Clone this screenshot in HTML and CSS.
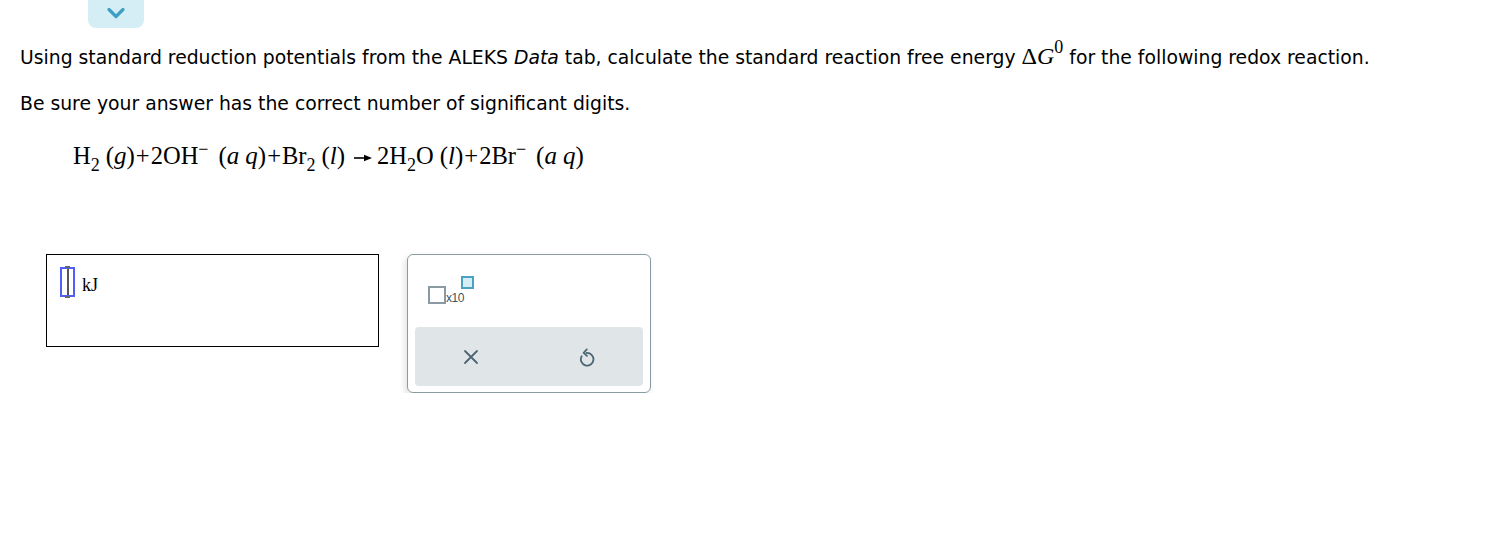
FILE: index.html
```html
<!DOCTYPE html>
<html>
<head>
<meta charset="utf-8">
<link rel="stylesheet" href="styles.css">
</head>
<body>
<div class="page">
  <div class="tab-row">
    <div class="tab">
      <svg width="22" height="14" viewBox="0 0 22 14"><path d="M4 3.5 L11 10.5 L18 3.5" fill="none" stroke="#3d9fc4" stroke-width="3.2" stroke-linecap="round" stroke-linejoin="round"/></svg>
    </div>
  </div>
  <p class="q">Using standard reduction potentials from the ALEKS <i>Data</i> tab, calculate the standard reaction free energy <span class="math">Δ<i>G</i><sup class="zero">0</sup></span> for the following redox reaction.</p>
  <p class="q q2">Be sure your answer has the correct number of significant digits.</p>
  <div class="eq">H<sub>2</sub><span class="par">(<i>g</i>)</span><span class="op">+</span>2OH<sup>−</sup><span class="par sp">(<i>a</i>&thinsp;<i>q</i>)</span><span class="op">+</span>Br<sub>2</sub><span class="par">(<i>l</i>)</span><svg class="arrow" width="18" height="8" viewBox="0 0 18 8"><path d="M0 4 L12 4" stroke="#000" stroke-width="1.6"/><path d="M10 0.8 L18 4 L10 7.2 Z" fill="#000"/></svg>2H<sub>2</sub>O<span class="par">(<i>l</i>)</span><span class="op">+</span>2Br<sup>−</sup><span class="par sp">(<i>a</i>&thinsp;<i>q</i>)</span></div>
  <div class="answer-row">
    <div class="answer">
      <span class="cursor"><span class="beam"></span></span>
      <span class="unit">kJ</span>
    </div>
    <div class="panel">
      <div class="sci">
        <span class="base-box"></span><span class="x10">x10</span><span class="exp-box"></span>
      </div>
      <div class="actions">
        <span class="btn">
          <svg width="18" height="18" viewBox="0 0 18 18"><path d="M3 3 L15 15 M15 3 L3 15" stroke="#4b6672" stroke-width="1.8" stroke-linecap="round"/></svg>
        </span>
        <span class="btn">
          <svg width="18" height="20" viewBox="0 0 18 20"><path d="M3.6 9.3 A6.3 6.3 0 1 0 8.5 6" fill="none" stroke="#4b6672" stroke-width="1.8" stroke-linecap="round"/><path d="M8.8 2.4 L5.6 5.8 L9 8.8" fill="none" stroke="#4b6672" stroke-width="1.8" stroke-linecap="round" stroke-linejoin="round"/></svg>
        </span>
      </div>
    </div>
  </div>
</div>
</body>
</html>
```
FILE: styles.css
```css
html, body { margin: 0; padding: 0; background: #fff; }
.page { padding: 0 0 0 20px; font-family: "DejaVu Sans", Verdana, sans-serif; color: #000; }
.tab-row { height: 28px; padding-left: 68px; }
.tab { width: 56px; height: 28px; background: #d5eef5; border-radius: 0 0 8px 8px; display: flex; justify-content: center; align-items: center; }
.tab svg { margin-top: -2px; }
.q { margin: 0; font-size: 18.8px; line-height: 22px; padding-top: 17px; }
.q2 { padding-top: 24px; }
.math { font-family: "Liberation Serif", "Times New Roman", serif; font-size: 24px; }
.math .zero { font-size: 18px; vertical-align: 0; position: relative; top: -11px; line-height: 0; }
.eq { font-family: "Liberation Serif", "Times New Roman", serif; font-size: 24.5px; margin: 26px 0 0 53px; line-height: 30px; }
.eq sub { font-size: 18px; vertical-align: -7px; line-height: 0; }
.eq sup { font-size: 18px; vertical-align: 9px; line-height: 0; }
.eq .par { margin-left: 6px; font-size: 25px; }
.eq .par.sp { margin-left: 10px; }
.eq .par.sp i + i { margin-left: 1px; }
.eq .op { margin: 0 1px; }
.arrow { margin: 0 5px 0 9px; vertical-align: 2px; }
.answer-row { display: flex; gap: 28px; align-items: flex-start; margin: 83px 0 0 26px; }
.answer { width: 333px; height: 93px; border: 1px solid #000; display: flex; align-items: flex-start; padding: 12px 0 0 13px; box-sizing: border-box; }
.cursor { width: 15px; height: 30px; border: 2px solid #5060f5; box-sizing: border-box; display: flex; justify-content: center; position: relative; }
.cursor::before, .cursor::after { content: ""; position: absolute; left: 3px; width: 5px; height: 2px; background: #666; }
.cursor::before { top: -3px; }
.cursor::after { bottom: -3px; }
.beam { width: 2px; height: 100%; background: #555; }
.unit { font-family: "Liberation Serif", "Times New Roman", serif; font-size: 18px; margin: 8px 0 0 7px; }
.panel { width: 244px; height: 139px; border: 1px solid #8a9ba3; border-radius: 6px; box-sizing: border-box; box-shadow: -2px 3px 6px rgba(0,0,0,0.12); padding: 21px 7px 7px 7px; }
.sci { height: 51px; display: flex; align-items: flex-start; padding-left: 13px; }
.base-box { width: 18px; height: 18px; border: 2px solid #8a9aa2; box-sizing: border-box; margin-top: 10px; }
.x10 { font-family: "Liberation Sans", Arial, sans-serif; font-size: 12px; color: #3b5561; margin-top: 15px; letter-spacing: -0.4px; }
.exp-box { width: 13px; height: 13px; border: 2px solid #4aa2c0; background: #d5eef5; box-sizing: border-box; margin-left: -3px; }
.actions { height: 59px; background: #e0e5e8; border-radius: 4px; display: flex; }
.btn { flex: 1; display: flex; justify-content: center; align-items: center; }
.btn:first-child svg { margin-left: -2px; }
.btn:last-child svg { margin-left: 2px; }
```
